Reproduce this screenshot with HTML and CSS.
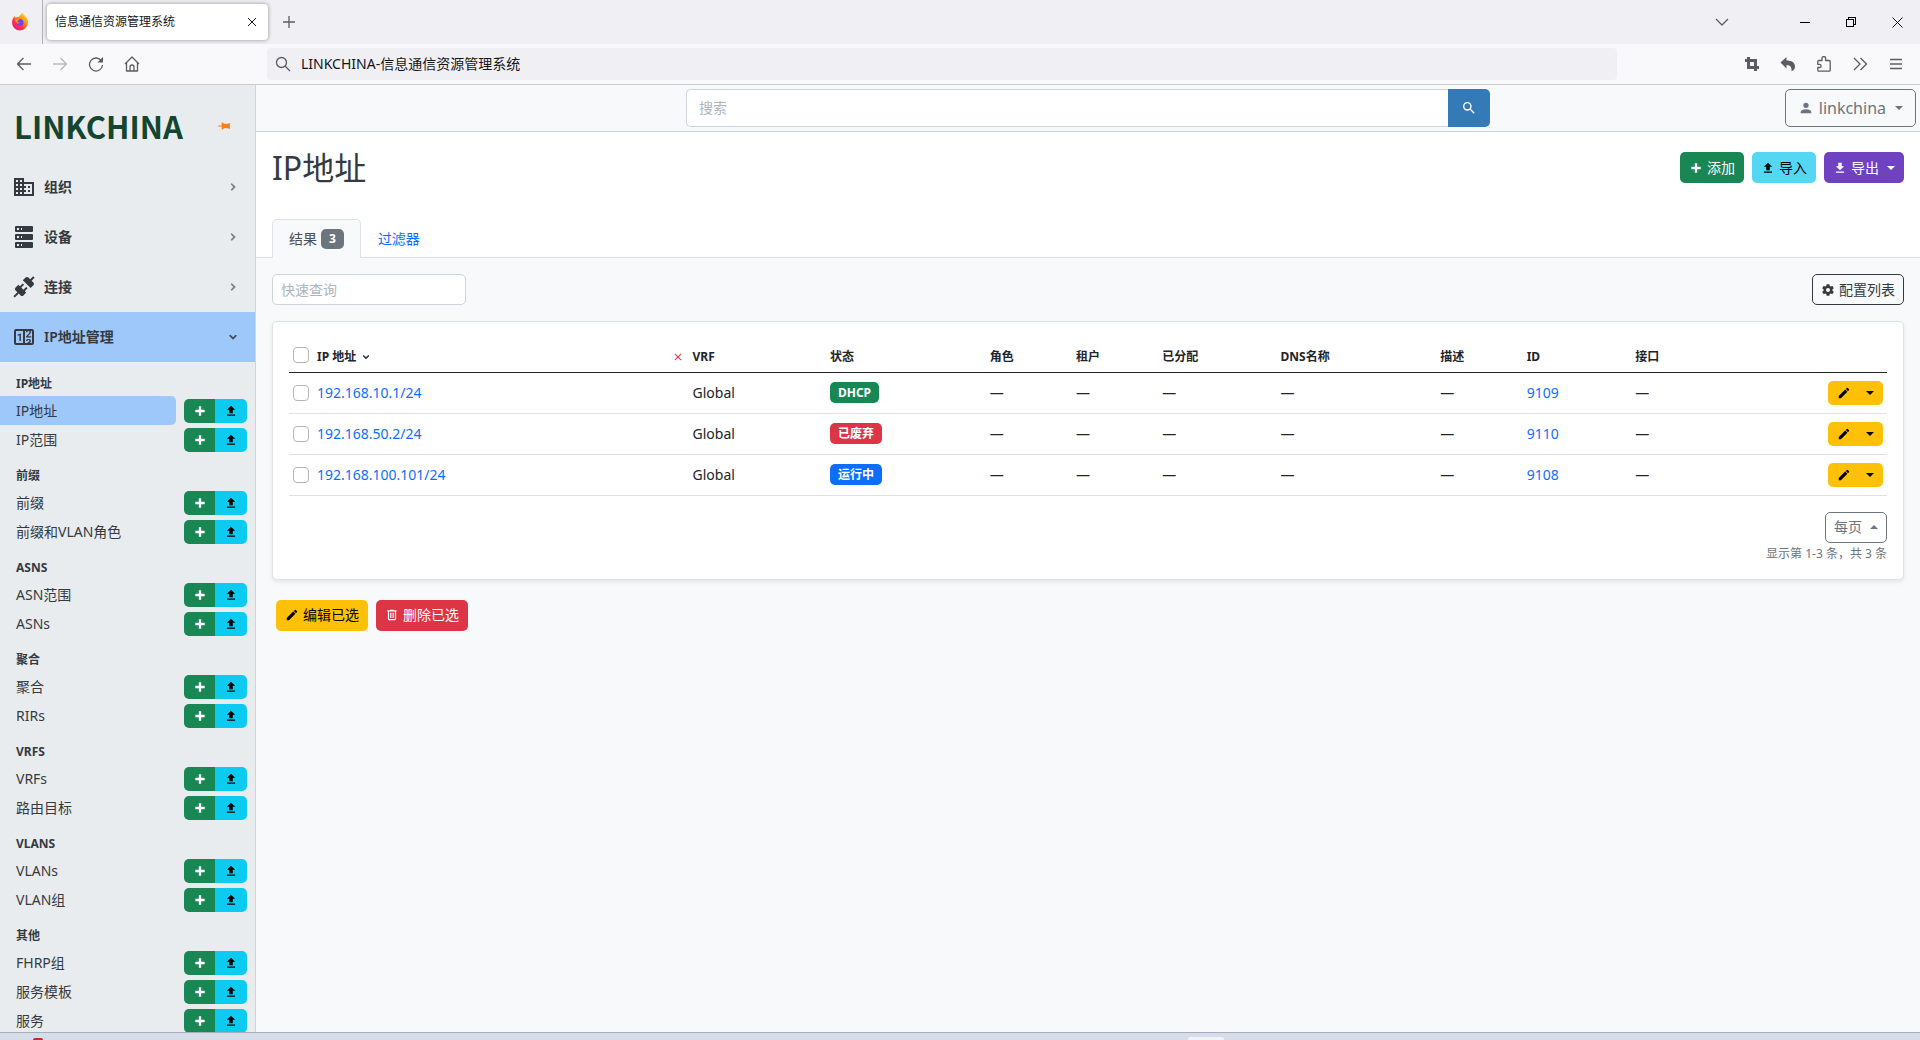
FILE: index.html
```html
<!DOCTYPE html>
<html lang="zh-CN">
<head>
<meta charset="utf-8">
<title>信息通信资源管理系统</title>
<link rel="stylesheet" href="styles.css">
</head>
<body>
<svg class="sprite" aria-hidden="true">
  <symbol id="plus" viewBox="0 0 24 24"><path d="M20 14H14V20H10V14H4V10H10V4H14V10H20V14Z"/></symbol>
  <symbol id="upload" viewBox="0 0 24 24"><path d="M9,16V10H5L12,3L19,10H15V16H9M5,20V18H19V20H5Z"/></symbol>
  <symbol id="download" viewBox="0 0 24 24"><path d="M5,20H19V18H5M19,9H15V3H9V9H5L12,16L19,9Z"/></symbol>
  <symbol id="pencil" viewBox="0 0 24 24"><path d="M20.71,7.04C21.1,6.65 21.1,6 20.71,5.63L18.37,3.29C18,2.9 17.35,2.9 16.96,3.29L15.12,5.12L18.87,8.87M3,17.25V21H6.75L17.81,9.93L14.06,6.18L3,17.25Z"/></symbol>
  <symbol id="right" viewBox="0 0 24 24"><path d="M8.59,16.58L13.17,12L8.59,7.41L10,6L16,12L10,18L8.59,16.58Z"/></symbol>
  <symbol id="down" viewBox="0 0 24 24"><path d="M7.41,8.58L12,13.17L16.59,8.58L18,10L12,16L6,10L7.41,8.58Z"/></symbol>
  <symbol id="close" viewBox="0 0 24 24"><path d="M19,6.41L17.59,5L12,10.59L6.41,5L5,6.41L10.59,12L5,17.59L6.41,19L12,13.41L17.59,19L19,17.59L13.41,12L19,6.41Z"/></symbol>
</svg>
<div class="window">
  <header class="tabbar">
    <div class="ff">
      <svg width="18" height="18" viewBox="0 0 18 18"><defs><linearGradient id="fg" x1="1" y1="0" x2="0.2" y2="1"><stop offset="0" stop-color="#fff44f"/><stop offset=".4" stop-color="#ff980e"/><stop offset=".7" stop-color="#ff3647"/><stop offset="1" stop-color="#e31587"/></linearGradient></defs><path fill="url(#fg)" d="M11.500 0c1 1.500 1.800 2.300 3 3.300 1.600 1.500 2.500 3.600 2.500 6A8 8 0 0 1 1 9.500C1 7 2 4.600 3.700 3c0 .8.200 1.400.7 1.900 1-.8 2.200-1.300 3.600-1.200C9 2.500 9.800 1 11.500 0z"/><circle cx="9" cy="9.500" r="3.600" fill="#7542e5"/><path fill="#ff980e" d="M4 6.500c2-1 3.800-.6 5 .5-1.500 0-2.300.7-2.300 1.600 0 1 1 1.300 2.300 1.100-.8 1.500-4.500 1.200-5-3.200z"/></svg>
    </div>
    <div class="tab"><span>信息通信资源管理系统</span>
      <button class="plain" aria-label="关闭标签页"><svg width="10" height="10" viewBox="0 0 10 10" class="line"><path d="M1 1l8 8M9 1l-8 8"/></svg></button>
    </div>
    <button class="plain newtab" aria-label="新标签页"><svg width="14" height="14" viewBox="0 0 14 14" class="line grey"><path d="M7 1v12M1 7h12"/></svg></button>
    <div class="winctl">
      <button class="plain alltabs" aria-label="所有标签页"><svg width="14" height="14" viewBox="0 0 14 14" class="line grey"><path d="M1 4l6 6 6-6"/></svg></button>
      <button class="plain" aria-label="最小化"><svg width="10" height="10" viewBox="0 0 10 10" class="crisp"><path d="M0 5.500h10"/></svg></button>
      <button class="plain" aria-label="还原"><svg width="10" height="10" viewBox="0 0 10 10" class="crisp"><path d="M.5 2.500h7v7h-7zM2.500 2.500v-2h7v7h-2"/></svg></button>
      <button class="plain" aria-label="关闭"><svg width="11" height="11" viewBox="0 0 11 11" class="line"><path d="M.5 .5l10 10M10.500 .5l-10 10"/></svg></button>
    </div>
  </header>
  <nav class="toolbar">
    <div class="navbtns">
      <button class="plain" aria-label="后退"><svg width="16" height="16" viewBox="0 0 16 16" class="line grey"><path d="M15 8H1.500M7.500 2l-6 6 6 6"/></svg></button>
      <button class="plain faded" aria-label="前进"><svg width="16" height="16" viewBox="0 0 16 16" class="line grey"><path d="M1 8h13.500M8.500 2l6 6-6 6"/></svg></button>
      <button class="plain" aria-label="刷新"><svg width="16" height="16" viewBox="0 0 16 16" class="line grey"><path d="M13.500 5A6.500 6.500 0 1 0 14.500 9"/><path d="M15 1v5.500H9.500z" fill="#5b5b66" stroke="none"/></svg></button>
      <button class="plain" aria-label="主页"><svg width="16" height="16" viewBox="0 0 16 16" class="line grey"><path d="M1 8L8 1l7 7M2.500 6.500V15h11V6.500M6 15v-4a2 2 0 0 1 4 0v4"/></svg></button>
    </div>
    <label class="urlbar"><svg width="16" height="16" viewBox="0 0 16 16" class="line grey"><circle cx="6.500" cy="6.500" r="5"/><path d="M10 10l5 5"/></svg><input type="text" aria-label="地址栏" value="LINKCHINA-信息通信资源管理系统"></label>
    <div class="tools">
      <button class="plain" aria-label="截图"><svg width="16" height="16" viewBox="0 0 16 16"><path fill="none" stroke="#5b5b66" stroke-width="3" d="M4.500 1v10.500H15M1 4.500h10.500V15"/></svg></button>
      <button class="plain" aria-label="撤销"><svg width="16" height="16" viewBox="0 0 16 16"><path fill="#5b5b66" d="M6.500 1v3.500c5 0 8.500 2 8.500 6 0 2-1 4-3.500 4.800C12 12 10.500 9 6.500 9v3.500L.5 6.500z"/></svg></button>
      <button class="plain" aria-label="扩展"><svg width="16" height="16" viewBox="0 0 16 16" class="line grey"><path d="M2.500 4.500H6V2.300a1.800 1.800 0 0 1 3.600 0V4.500H13a1.200 1.200 0 0 1 1.200 1.200V14a1.200 1.200 0 0 1-1.200 1.200H3A1.200 1.200 0 0 1 1.800 14v-2.500h1.700a1.600 1.600 0 0 0 0-3.200H1.800V5.200z"/></svg></button>
      <button class="plain" aria-label="更多工具"><svg width="16" height="16" viewBox="0 0 16 16" class="line grey"><path d="M2 2l6 6-6 6M8.500 2l6 6-6 6"/></svg></button>
      <button class="plain" aria-label="菜单"><svg width="16" height="16" viewBox="0 0 16 16" class="line grey"><path d="M2 3.500h12M2 8h12M2 12.500h12"/></svg></button>
    </div>
  </nav>

  <div class="app">
    <aside class="sidebar">
      <div class="brand"><a href="#" class="logo">LINKCHINA</a>
        <button class="plain pin" aria-label="固定侧栏"><svg width="14" height="14" viewBox="0 0 24 24"><path transform="rotate(90 12 12)" d="M16,12V4H17V2H7V4H8V12L6,14V16H11.200V22H12.800V16H18V14L16,12Z"/></svg></button></div>
      <a class="menu" href="#"><svg width="24" height="24" viewBox="0 0 24 24"><path d="M18,15H16V17H18M18,11H16V13H18M20,19H12V17H14V15H12V13H14V11H12V9H20M10,7H8V5H10M10,11H8V9H10M10,15H8V13H10M10,19H8V17H10M6,7H4V5H6M6,11H4V9H6M6,15H4V13H6M6,19H4V17H6M12,7V3H2V21H22V7H12Z"/></svg><span>组织</span><svg class="chev"><use href="#right"/></svg></a>
      <a class="menu" href="#"><svg width="24" height="24" viewBox="0 0 24 24"><path d="M4,1H20A1,1 0 0,1 21,2V6A1,1 0 0,1 20,7H4A1,1 0 0,1 3,6V2A1,1 0 0,1 4,1M4,9H20A1,1 0 0,1 21,10V14A1,1 0 0,1 20,15H4A1,1 0 0,1 3,14V10A1,1 0 0,1 4,9M4,17H20A1,1 0 0,1 21,18V22A1,1 0 0,1 20,23H4A1,1 0 0,1 3,22V18A1,1 0 0,1 4,17M9,5H10V3H9V5M9,13H10V11H9V13M9,21H10V19H9V21M5,3V5H7V3H5M5,11V13H7V11H5M5,19V21H7V19H5Z"/></svg><span>设备</span><svg class="chev"><use href="#right"/></svg></a>
      <a class="menu" href="#"><svg width="24" height="24" viewBox="0 0 24 24"><path d="M21.400 7.500C22.200 8.300 22.200 9.600 21.400 10.300L18.600 13.100L10.800 5.300L13.600 2.500C14.400 1.700 15.700 1.700 16.400 2.500L18.200 4.300L21.200 1.300L22.600 2.700L19.600 5.700L21.400 7.500M15.600 13.300L14.200 11.900L11.400 14.700L9.300 12.600L12.100 9.800L10.700 8.400L7.900 11.200L6.400 9.800L3.600 12.600C2.800 13.400 2.800 14.700 3.600 15.400L5.400 17.200L1.400 21.200L2.800 22.600L6.800 18.600L8.600 20.400C9.400 21.200 10.700 21.200 11.400 20.400L14.200 17.600L12.800 16.200L15.600 13.300Z"/></svg><span>连接</span><svg class="chev"><use href="#right"/></svg></a>
      <a class="menu active" href="#"><svg width="24" height="24" viewBox="0 0 24 24"><path d="M4,4H20A2,2 0 0,1 22,6V18A2,2 0 0,1 20,20H4A2,2 0 0,1 2,18V6A2,2 0 0,1 4,4M4,6V18H11V6H4M20,18V6H18.760C19,6.540 18.950,7.070 18.950,7.130C18.880,7.800 18.410,8.500 18.240,8.750L15.910,11.300L19.230,11.280L19.240,12.500L14.040,12.470L14,11.470C14,11.470 17.050,8.240 17.200,7.950C17.340,7.670 17.910,6 16.500,6C15.270,6.050 15.410,7.300 15.410,7.300L13.870,7.310C13.870,7.310 13.880,6.650 14.250,6H13V18H15.580L15.570,17.140L16.540,17.130C16.540,17.130 17.450,16.970 17.460,16.080C17.500,15.080 16.650,15.080 16.500,15.080C16.370,15.080 15.430,15.130 15.430,15.950H13.910C13.910,15.950 13.950,13.890 16.500,13.890C19.100,13.890 18.960,15.910 18.960,15.910C18.960,15.910 19,17.160 17.850,17.630L18.370,18H20M8.920,16H7.420V10.200L5.620,10.760V9.530L8.760,8.410H8.920V16Z"/></svg><span>IP地址管理</span><svg class="chev"><use href="#down"/></svg></a>
      <div id="submenu"></div>
    </aside>

    <main class="main">
      <div class="topbar">
        <form class="search"><input type="text" placeholder="搜索" aria-label="搜索"><button type="button" aria-label="搜索"><svg width="16" height="16" viewBox="0 0 24 24"><path d="M9.500,3A6.500,6.500 0 0,1 16,9.500C16,11.110 15.410,12.590 14.440,13.730L14.710,14H15.500L20.500,19L19,20.500L14,15.500V14.710L13.730,14.440C12.590,15.410 11.110,16 9.500,16A6.500,6.500 0 0,1 3,9.500A6.500,6.500 0 0,1 9.500,3M9.500,5C7,5 5,7 5,9.500C5,12 7,14 9.500,14C12,14 14,12 14,9.500C14,7 12,5 9.500,5Z"/></svg></button></form>
        <button class="user"><svg width="16" height="16" viewBox="0 0 24 24"><path d="M12,4A4,4 0 0,1 16,8A4,4 0 0,1 12,12A4,4 0 0,1 8,8A4,4 0 0,1 12,4M12,14C16.420,14 20,15.790 20,18V20H4V18C4,15.790 7.580,14 12,14Z"/></svg>linkchina<i class="caret"></i></button>
      </div>
      <div class="head">
        <div class="titlerow">
          <h1>IP地址</h1>
          <div class="actions">
            <button class="btn green"><svg><use href="#plus"/></svg>添加</button>
            <button class="btn cyan"><svg><use href="#upload"/></svg>导入</button>
            <button class="btn purple"><svg><use href="#download"/></svg>导出<i class="caret"></i></button>
          </div>
        </div>
        <div class="tabs">
          <a href="#" class="current">结果 <span class="count">3</span></a>
          <a href="#">过滤器</a>
        </div>
      </div>
      <div class="content">
        <div class="filters">
          <input class="quick" type="text" placeholder="快速查询" aria-label="快速查询">
          <button class="btn outline"><svg viewBox="0 0 24 24"><path d="M12,15.500A3.500,3.500 0 0,1 8.500,12A3.500,3.500 0 0,1 12,8.500A3.500,3.500 0 0,1 15.500,12A3.500,3.500 0 0,1 12,15.500M19.430,12.970C19.470,12.650 19.500,12.330 19.500,12C19.500,11.670 19.470,11.340 19.430,11L21.540,9.370C21.730,9.220 21.780,8.950 21.660,8.730L19.660,5.270C19.540,5.050 19.270,4.960 19.050,5.050L16.560,6.050C16.040,5.660 15.500,5.320 14.870,5.070L14.500,2.420C14.460,2.180 14.250,2 14,2H10C9.750,2 9.540,2.180 9.500,2.420L9.130,5.070C8.500,5.320 7.960,5.660 7.440,6.050L4.950,5.050C4.730,4.960 4.460,5.050 4.340,5.270L2.340,8.730C2.210,8.950 2.270,9.220 2.460,9.370L4.570,11C4.530,11.340 4.500,11.670 4.500,12C4.500,12.330 4.530,12.650 4.570,12.970L2.460,14.630C2.270,14.780 2.210,15.050 2.340,15.270L4.340,18.730C4.460,18.950 4.730,19.030 4.950,18.950L7.440,17.940C7.960,18.340 8.500,18.680 9.130,18.930L9.500,21.580C9.540,21.820 9.750,22 10,22H14C14.250,22 14.460,21.820 14.500,21.580L14.870,18.930C15.500,18.670 16.040,18.340 16.560,17.940L19.050,18.950C19.270,19.030 19.540,18.950 19.660,18.730L21.660,15.270C21.780,15.050 21.730,14.780 21.540,14.630L19.430,12.970Z"/></svg>配置列表</button>
        </div>
        <section class="card">
          <table>
            <colgroup><col class="c-check"><col class="c-ip"><col class="c-vrf"><col class="c-status"><col class="c-small"><col class="c-small"><col class="c-assigned"><col class="c-dns"><col class="c-small"><col class="c-id"><col class="c-small"><col></colgroup>
            <thead><tr>
              <th><input type="checkbox" aria-label="全选"></th>
              <th><div class="sorted"><span>IP 地址</span><svg class="sort"><use href="#down"/></svg><svg class="clear"><use href="#close"/></svg></div></th>
              <th>VRF</th><th>状态</th><th>角色</th><th>租户</th><th>已分配</th><th>DNS名称</th><th>描述</th><th>ID</th><th>接口</th><th></th>
            </tr></thead>
            <tbody id="rows"></tbody>
          </table>
          <div class="pager">
            <button class="btn perpage">每页<i class="caret up"></i></button>
            <small>显示第 1-3 条，共 3 条</small>
          </div>
        </section>
        <div class="bulk">
          <button class="btn yellow"><svg><use href="#pencil"/></svg>编辑已选</button>
          <button class="btn red"><svg viewBox="0 0 24 24"><path d="M9,3V4H4V6H5V19A2,2 0 0,0 7,21H17A2,2 0 0,0 19,19V6H20V4H15V3H9M7,6H17V19H7V6M9,8V17H11V8H9M13,8V17H15V8H13Z"/></svg>删除已选</button>
        </div>
      </div>
    </main>
  </div>
  <footer class="taskbar"><span class="app-red"></span><span class="app-white"></span></footer>
</div>
<script src="app.js"></script>
</body>
</html>
```
FILE: styles.css
```css
* { box-sizing: border-box; }
body { margin: 0; font: 14px/20px "Noto Sans", "Noto Sans CJK SC", sans-serif; color: #212529; }
button, input { font: inherit; color: inherit; }
a { text-decoration: none; color: #0d6efd; }
svg { fill: currentColor; flex: none; }
.sprite { display: none; }
.window { height: 100vh; display: flex; flex-direction: column; overflow: hidden; }
.plain { border: 0; background: none; padding: 0; display: flex; align-items: center; justify-content: center; }
.line { fill: none; stroke: #15141a; stroke-width: 1; stroke-linejoin: round; }
.line.grey { stroke: #5b5b66; stroke-width: 1.3; }
.crisp { fill: none; stroke: #000; shape-rendering: crispEdges; }

.tabbar { flex: none; height: 44px; background: #f0f0f4; display: flex; align-items: center; }
.ff { width: 43px; height: 44px; border-right: 1px solid #b0b0b8; display: flex; align-items: center; padding-left: 11px; }
.tab { margin-left: 4px; width: 221px; height: 36px; background: #fff; border-radius: 4px; box-shadow: 0 0 4px rgba(0,0,0,.4); display: flex; align-items: center; justify-content: space-between; padding: 0 11px 0 8px; font-size: 12px; color: #15141a; }
.newtab { margin-left: 14px; }
.winctl { margin-left: auto; display: flex; }
.winctl .plain { width: 46px; height: 44px; }
.winctl .alltabs { margin-right: 37px; }
.toolbar { flex: none; height: 41px; background: #f9f9fb; border-bottom: 1px solid #ccc; display: flex; align-items: center; }
.navbtns { width: 267px; display: flex; gap: 20px; padding-left: 16px; }
.faded { opacity: .4; }
.urlbar { flex: 1; height: 32px; border-radius: 4px; background: #f0f0f4; display: flex; align-items: center; gap: 10px; padding-left: 8px; }
.urlbar input { flex: 1; border: 0; background: none; padding: 0; color: #15141a; outline: 0; }
.tools { width: 303px; display: flex; justify-content: flex-end; gap: 20px; padding-right: 16px; }

.app { flex: 1; min-height: 0; display: flex; }
.sidebar { width: 256px; flex: none; background: #e9ecef; border-right: 1px solid #ced4da; overflow: hidden; color: #343a40; }
.brand { height: 77px; display: flex; align-items: center; justify-content: space-between; padding: 4px 24px 0 14px; }
.logo { font: 700 31px/40px "Noto Sans CJK SC", sans-serif; color: #14452f; }
.pin { color: #fd7e14; }
.menu { height: 50px; display: flex; align-items: center; gap: 8px; padding: 0 15px 0 12px; color: #343a40; font-weight: 600; }
.menu span { flex: 1; }
.menu.active { background: #9ec8f9; }
.chev { width: 14px; height: 14px; color: #6c757d; stroke: currentColor; }
.active .chev { color: #343a40; }
.group h2 { margin: 0; padding: 13px 16px 3px; font-size: 12px; line-height: 18px; font-weight: 700; }
.item { height: 29px; display: flex; align-items: center; justify-content: space-between; padding-right: 8px; }
.item > a { width: 176px; line-height: 29px; padding-left: 16px; color: #343a40; border-radius: 0 5px 5px 0; }
.item > a.on { background: #9ec8f9; }
.pair { display: flex; height: 24px; border-radius: 5px; overflow: hidden; }
.pair button { border: 0; padding: 0; width: 32px; display: flex; align-items: center; justify-content: center; }
.pair .add { background: #198754; color: #fff; width: 31px; }
.pair .imp { background: #0dcaf0; color: #000; }
.pair svg { width: 14px; height: 14px; }

.main { flex: 1; min-width: 0; background: #f8f9fa; overflow: hidden; }
.topbar { height: 47px; background: #f8f9fa; border-bottom: 1px solid #ced4da; display: grid; grid-template-columns: 1fr 804px 1fr; align-items: center; padding: 0 4px; }
.search { grid-column: 2; display: flex; height: 38px; }
.search input { flex: 1; background: #fff; border: 1px solid #ced4da; border-right: 0; border-radius: 5px 0 0 5px; padding: 0 12px; }
.search button { width: 42px; border: 0; background: #337ab7; color: #fff; border-radius: 0 5px 5px 0; padding: 0; display: flex; align-items: center; justify-content: center; }
::placeholder { color: #adb5bd; opacity: 1; }
.user { justify-self: end; height: 38px; border: 1px solid #6c757d; border-radius: 5px; background: none; color: #6c757d; font-size: 16px; padding: 0 12px; display: flex; align-items: center; gap: 5px; }
.caret { border: 4px solid transparent; border-top-color: currentColor; border-bottom: 0; margin-left: 4px; }
.caret.up { border-top: 0; border-bottom: 4px solid currentColor; }

.head { background: #fff; border-bottom: 1px solid #dee2e6; padding: 16px 16px 0; height: 126px; display: flex; flex-direction: column; justify-content: space-between; }
.titlerow { display: flex; justify-content: space-between; align-items: flex-start; padding-top: 4px; }
h1 { margin: 0; font-size: 32px; line-height: 32px; font-weight: 400; color: #343a40; }
.actions { display: flex; gap: 8px; }
.btn { height: 31px; border: 1px solid transparent; border-radius: 5px; padding: 0 8px; display: flex; align-items: center; justify-content: center; gap: 4px; white-space: nowrap; }
.btn svg { width: 14px; height: 14px; }
.green { background: #198754; color: #fff; }
.cyan { background: #54d7f2; color: #000; }
.purple { background: #6f42c1; color: #fff; }
.yellow { background: #ffc107; color: #000; }
.red { background: #dc3545; color: #fff; }
.blue { background: #0d6efd; color: #fff; }
.outline { border-color: #343a40; background: none; color: #343a40; }
.tabs { display: flex; margin-bottom: -1px; }
.tabs a { height: 39px; padding: 0 16px; border: 1px solid transparent; border-radius: 5px 5px 0 0; display: flex; align-items: center; gap: 4px; }
.tabs .current { background: #f8f9fa; border-color: #dee2e6 #dee2e6 #f8f9fa; color: #495057; }
.count { background: #6c757d; color: #fff; font-size: 12px; font-weight: 700; border-radius: 5px; padding: 0 8px; }

.content { padding: 16px; }
.filters { display: flex; justify-content: space-between; margin-bottom: 16px; }
.quick { width: 194px; height: 31px; border: 1px solid #ced4da; border-radius: 5px; background: #fff; padding: 0 8px; }
.card { background: #fff; border: 1px solid #dee2e6; border-radius: 5px; padding: 16px; box-shadow: 0 2px 4px rgba(0,0,0,.08); }
table { width: 100%; table-layout: fixed; border-collapse: collapse; }
.c-check { width: 24px; }
.c-ip { width: 23.5%; }
.c-vrf { width: 8.6%; }
.c-status, .c-dns { width: 10%; }
.c-small { width: 5.4%; }
.c-assigned { width: 7.4%; }
.c-id { width: 6.8%; }
th, td { padding: 0 4px; text-align: left; vertical-align: middle; }
th { height: 34px; padding-top: 4px; font-size: 12px; font-weight: 700; border-bottom: 1px solid #212529; }
th:first-child { padding-top: 0; }
td { height: 41px; border-bottom: 1px solid #dee2e6; }
input[type="checkbox"] { appearance: none; display: block; width: 16px; height: 16px; margin: 0; border: 1px solid #b6b6b6; border-radius: 4px; background: #fff; }
.sorted { display: flex; align-items: center; gap: 4px; }
.sort { width: 12px; height: 12px; stroke: currentColor; }
.clear { width: 12px; height: 12px; margin-left: auto; margin-right: 1px; color: #dc3545; }
.badge { display: inline-block; font-size: 12px; line-height: 21px; font-weight: 700; border-radius: 5px; padding: 0 8px; vertical-align: middle; }
.edit { margin-left: auto; width: 55px; height: 24px; border-radius: 5px; overflow: hidden; display: flex; background: #ffc107; }
.edit button { border: 0; background: none; padding: 0; color: #000; display: flex; align-items: center; justify-content: center; width: 20px; }
.edit button:first-child { width: 32px; }
.edit svg { width: 14px; height: 14px; }
.edit .caret { margin: 0; }
.pager { display: flex; flex-direction: column; align-items: flex-end; padding-top: 16px; gap: 2px; color: #6c757d; }
.perpage { border-color: #6c757d; background: none; color: #6c757d; }
.pager small { font-size: 12px; line-height: 18px; }
.bulk { display: flex; gap: 8px; padding: 20px 4px 0; }

.taskbar { flex: none; height: 8px; background: #d6dde9; border-top: 1px solid #a9abb8; display: flex; justify-content: space-between; align-items: flex-end; padding: 0 696px 0 33px; overflow: hidden; }
.app-red { width: 10px; height: 2px; border-radius: 5px 5px 0 0; background: #b5302c; }
.app-white { width: 36px; height: 3px; border-radius: 2px 2px 0 0; background: #f0f3f9; }
```
FILE: app.js
```js
const icon = (name) => `<svg><use href="#${name}"/></svg>`;

const groups = [
  ["IP地址", ["IP地址", "IP范围"]],
  ["前缀", ["前缀", "前缀和VLAN角色"]],
  ["ASNS", ["ASN范围", "ASNs"]],
  ["聚合", ["聚合", "RIRs"]],
  ["VRFS", ["VRFs", "路由目标"]],
  ["VLANS", ["VLANs", "VLAN组"]],
  ["其他", ["FHRP组", "服务模板", "服务"]],
];
document.getElementById("submenu").innerHTML = groups.map(([title, items], g) =>
  `<section class="group"><h2>${title}</h2>` + items.map((name, i) =>
    `<div class="item"><a href="#"${g + i === 0 ? ' class="on"' : ""}>${name}</a><span class="pair"><button class="add" aria-label="添加${name}">${icon("plus")}</button><button class="imp" aria-label="导入${name}">${icon("upload")}</button></span></div>`
  ).join("") + "</section>").join("");

const rows = [
  ["192.168.10.1/24", "green", "DHCP", 9109],
  ["192.168.50.2/24", "red", "已废弃", 9110],
  ["192.168.100.101/24", "blue", "运行中", 9108],
];
const dash = "<td>—</td>";
document.getElementById("rows").innerHTML = rows.map(([ip, color, status, id]) =>
  `<tr><td><input type="checkbox" aria-label="${ip}"></td><td><a href="#">${ip}</a></td><td>Global</td>` +
  `<td><span class="badge ${color}">${status}</span></td>${dash.repeat(5)}<td><a href="#">${id}</a></td>${dash}` +
  `<td><div class="edit"><button aria-label="编辑">${icon("pencil")}</button><button aria-label="更多"><i class="caret"></i></button></div></td></tr>`
).join("");
```
